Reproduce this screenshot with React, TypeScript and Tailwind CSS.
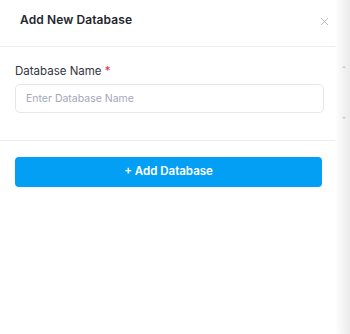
import { X } from "lucide-react";

export default function App() {
  return (
    <div className="relative flex h-[334px] w-[350px] overflow-hidden bg-white font-['Inter',sans-serif]">
      <div className="flex w-[335px] flex-col">
        {/* Header */}
        <div className="flex h-[47px] items-start justify-between border-b border-[#ededf0] pl-[20px] pr-[4px]">
          <h2 className="mt-[11px] text-[12px] font-semibold tracking-[0.1px] text-[#24262e]">
            Add New Database
          </h2>
          <button className="mt-[15px] text-[#9a9db0]">
            <X size={13} strokeWidth={1.3} />
          </button>
        </div>

        {/* Body */}
        <div className="flex h-[94px] flex-col border-b border-[#ededf0] px-[15px] pt-[16px]">
          <label className="text-[11.5px] text-[#34363f]">
            Database Name <span className="text-[#e5304d]">*</span>
          </label>
          <input
            className="mt-[4px] h-[29px] w-[309px] rounded-[5px] border border-[#e4e6ee] px-[10px] text-[10.5px] outline-none placeholder:text-[#a4a7b8]"
            placeholder="Enter Database Name"
          />
        </div>

        {/* Footer */}
        <div className="px-[15px] pt-[16px]">
          <button className="h-[30px] w-[307px] rounded-[4px] bg-[#039ff4] text-[11.5px] font-semibold text-white">
            + Add Database
          </button>
        </div>
      </div>

      {/* right shadow */}
      <div className="relative flex-1 bg-gradient-to-r from-white to-[#ebebeb]">
        <span className="absolute left-[7px] top-[66px] h-0 w-0 border-x-[2px] border-b-[2px] border-x-transparent border-b-[#c8c8c8]" />
        <span className="absolute left-[7px] top-[117px] h-0 w-0 border-x-[2px] border-t-[2px] border-x-transparent border-t-[#c8c8c8]" />
      </div>
    </div>
  );
}
